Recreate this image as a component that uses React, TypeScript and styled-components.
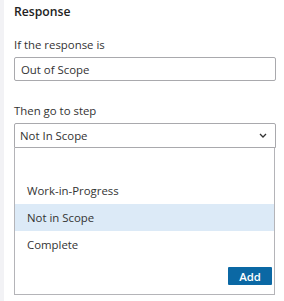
import React from "react";
import styled, { createGlobalStyle } from "styled-components";

const Global = createGlobalStyle`
  html, body {
    margin: 0;
    background: #fff;
    font-family: "Open Sans", "Noto Sans", sans-serif;
    color: #333;
  }
`;

const options = ["", "Work-in-Progress", "Not in Scope", "Complete"];

const Panel = styled.div`
  width: 284px;
  height: 301px;
  box-sizing: border-box;
  border-left: 4px solid #f2f2f5;
  padding: 3px 8px 0 10px;
  display: flex;
  flex-direction: column;
`;

const Title = styled.h2`
  margin: 0;
  font-size: 12.2px;
  font-weight: 600;
  line-height: 18px;
  color: #222;
`;

const Label = styled.div<{ $top: number }>`
  font-size: 11.4px;
  line-height: 16px;
  color: #333;
  margin-top: ${(p) => p.$top}px;
  margin-bottom: 4px;
`;

const Field = styled.div`
  height: 24px;
  box-sizing: border-box;
  border: 1px solid #a9a9ad;
  border-radius: 2px;
  padding: 0 6px;
  display: flex;
  align-items: center;
  justify-content: space-between;
  font-size: 11.4px;
  color: #333;
`;

const Select = styled(Field)`
  height: 25px;
  border-radius: 2px 2px 0 0;
  padding: 0 8px 0 5px;
`;

const List = styled.div`
  box-sizing: border-box;
  height: 147px;
  margin-right: 1px;
  border: 1px solid #b4b4b8;
  border-top: none;
  padding-top: 2px;
  display: flex;
  flex-direction: column;
`;

const Option = styled.div<{ $active?: boolean }>`
  height: 27px;
  flex-shrink: 0;
  display: flex;
  align-items: center;
  padding-left: 12px;
  font-size: 11.4px;
  color: #333;
  background: ${(p) => (p.$active ? "#dceaf7" : "transparent")};
`;

const Footer = styled.div`
  display: flex;
  justify-content: flex-end;
  padding: 9px 2px 0 0;
`;

const Button = styled.button`
  width: 44px;
  height: 18px;
  border: none;
  border-radius: 1px;
  background: #0b68a4;
  color: #fff;
  font-family: "Open Sans", "Noto Sans", sans-serif;
  font-size: 11.4px;
  font-weight: 600;
  padding: 0;
`;

const Chevron = () => (
  <svg width="8" height="5" viewBox="0 0 8 5">
    <path d="M1 1l3 3 3-3" fill="none" stroke="#333" strokeWidth="1.3" />
  </svg>
);

export default function App() {
  return (
    <>
      <Global />
      <Panel>
        <Title>Response</Title>
        <Label $top={16}>If the response is</Label>
        <Field>Out of Scope</Field>
        <Label $top={22}>Then go to step</Label>
        <Select>
          <span>Not In Scope</span>
          <Chevron />
        </Select>
        <List>
          {options.map((o, i) => (
            <Option key={i} $active={o === "Not in Scope"}>
              {o}
            </Option>
          ))}
          <Footer>
            <Button>Add</Button>
          </Footer>
        </List>
      </Panel>
    </>
  );
}
